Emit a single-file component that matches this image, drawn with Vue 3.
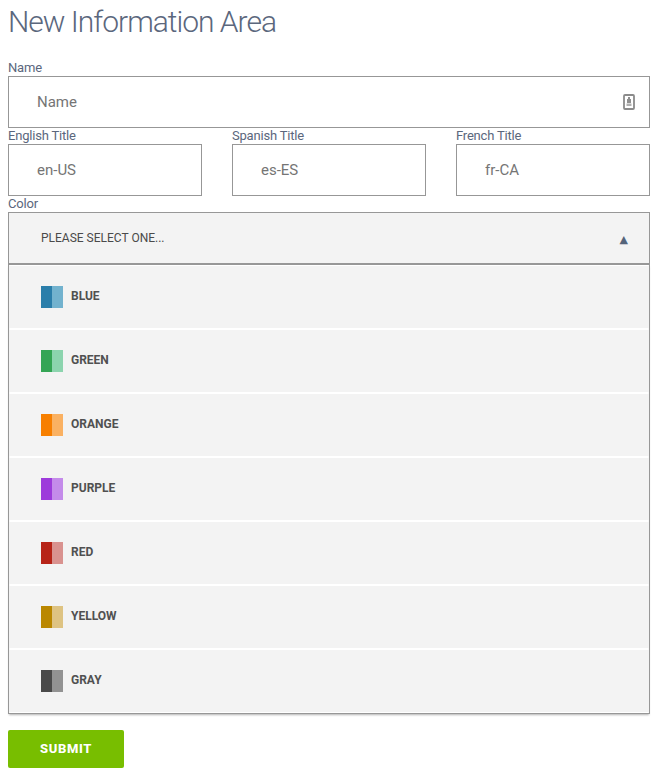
<script setup>
const titles = [
  { label: 'English Title', locale: 'en-US' },
  { label: 'Spanish Title', locale: 'es-ES' },
  { label: 'French Title', locale: 'fr-CA' },
]
const colors = [
  { name: 'Blue', dark: '#2a7eaa', light: '#72b2ce' },
  { name: 'Green', dark: '#34a555', light: '#8cd4ae' },
  { name: 'Orange', dark: '#f77f00', light: '#fab162' },
  { name: 'Purple', dark: '#9d3bdb', light: '#c48bea' },
  { name: 'Red', dark: '#b72418', light: '#d9928f' },
  { name: 'Yellow', dark: '#ba8700', light: '#dec382' },
  { name: 'Gray', dark: '#4a4a4a', light: '#929292' },
]
</script>

<template>
  <form class="page" @submit.prevent>
    <h1>New Information Area</h1>
    <label class="field">
      <span class="label">Name</span>
      <span class="control">
        <input type="text" placeholder="Name" />
        <svg class="contact" width="12" height="16" viewBox="0 0 12 16">
          <rect x="1" y="1" width="10" height="14" rx="1" fill="#fff" stroke="#8b8b8b" stroke-width="1.8" />
          <path d="M5 3h2v2h1v4H4V5h1z" fill="#8f8f8f" />
          <path d="M3.5 9.5h5v2.5h-5z" fill="#b0b0b0" />
        </svg>
      </span>
    </label>
    <div class="titles">
      <label v-for="t in titles" :key="t.locale" class="field">
        <span class="label">{{ t.label }}</span>
        <input type="text" :placeholder="t.locale" />
      </label>
    </div>
    <div class="label">Color</div>
    <div class="select">
      <span>Please select one...</span>
      <span class="arrow">▲</span>
    </div>
    <ul class="options">
      <li v-for="c in colors" :key="c.name">
        <span class="swatch">
          <i :style="{ background: c.dark }"></i><i :style="{ background: c.light }"></i>
        </span>
        <span class="name">{{ c.name }}</span>
      </li>
    </ul>
    <button type="submit">Submit</button>
  </form>
</template>

<style>
body {
  background: #fff;
}
</style>

<style scoped>
* {
  box-sizing: border-box;
}
.page {
  padding: 0 12px 0 8px;
  font-family: Roboto, sans-serif;
  color: #5b677d;
}
h1 {
  margin: 0 0 16px;
  height: 44px;
  font-size: 30px;
  line-height: 44px;
  font-weight: 300;
  letter-spacing: -1px;
}
.field {
  display: block;
}
.label {
  display: block;
  height: 16px;
  font-size: 13px;
  line-height: 16px;
  letter-spacing: -0.2px;
}
.control {
  display: block;
  position: relative;
}
input {
  display: block;
  width: 100%;
  height: 52px;
  margin: 0;
  padding: 0 28px;
  border: 1px solid #979797;
  border-radius: 0;
  background: #fff;
  font: 15px Roboto, sans-serif;
  outline: none;
}
input::placeholder {
  color: #757575;
}
.contact {
  position: absolute;
  right: 15px;
  top: 18px;
}
.titles {
  display: grid;
  grid-template-columns: repeat(3, 1fr);
  gap: 30px;
}
.select {
  display: flex;
  justify-content: space-between;
  align-items: center;
  height: 52px;
  padding: 0 21px 0 32px;
  border: 1px solid #979797;
  background: #f3f3f3;
  font-size: 12px;
  color: #4a4a4a;
  text-transform: uppercase;
}
.arrow {
  padding-top: 2px;
  color: #54647a;
  font: 11px "DejaVu Sans", sans-serif;
}
.options {
  list-style: none;
  margin: 0;
  padding: 0;
  border: 1px solid #979797;
  box-shadow: 0 2px 2px -1px rgba(0, 0, 0, 0.3);
}
li {
  display: flex;
  align-items: center;
  height: 64px;
  padding-left: 31px;
  border: 1px solid #f3f3f3;
  border-top-color: #fff;
  border-bottom-color: #fff;
  background: #f3f3f3;
  font-size: 12px;
  font-weight: 700;
  color: #505050;
  text-transform: uppercase;
}
.swatch {
  display: flex;
  width: 22px;
  height: 22px;
  margin-right: 8px;
}
.swatch i {
  width: 11px;
}
.name {
  padding-bottom: 2px;
}
button {
  display: block;
  width: 116px;
  height: 38px;
  margin: 16px 0 0;
  padding: 0 0 1px;
  border: 0;
  border-radius: 2px;
  background: #78be00;
  color: #fff;
  font: 800 13px Roboto, sans-serif;
  letter-spacing: 0.6px;
  text-transform: uppercase;
}
</style>
